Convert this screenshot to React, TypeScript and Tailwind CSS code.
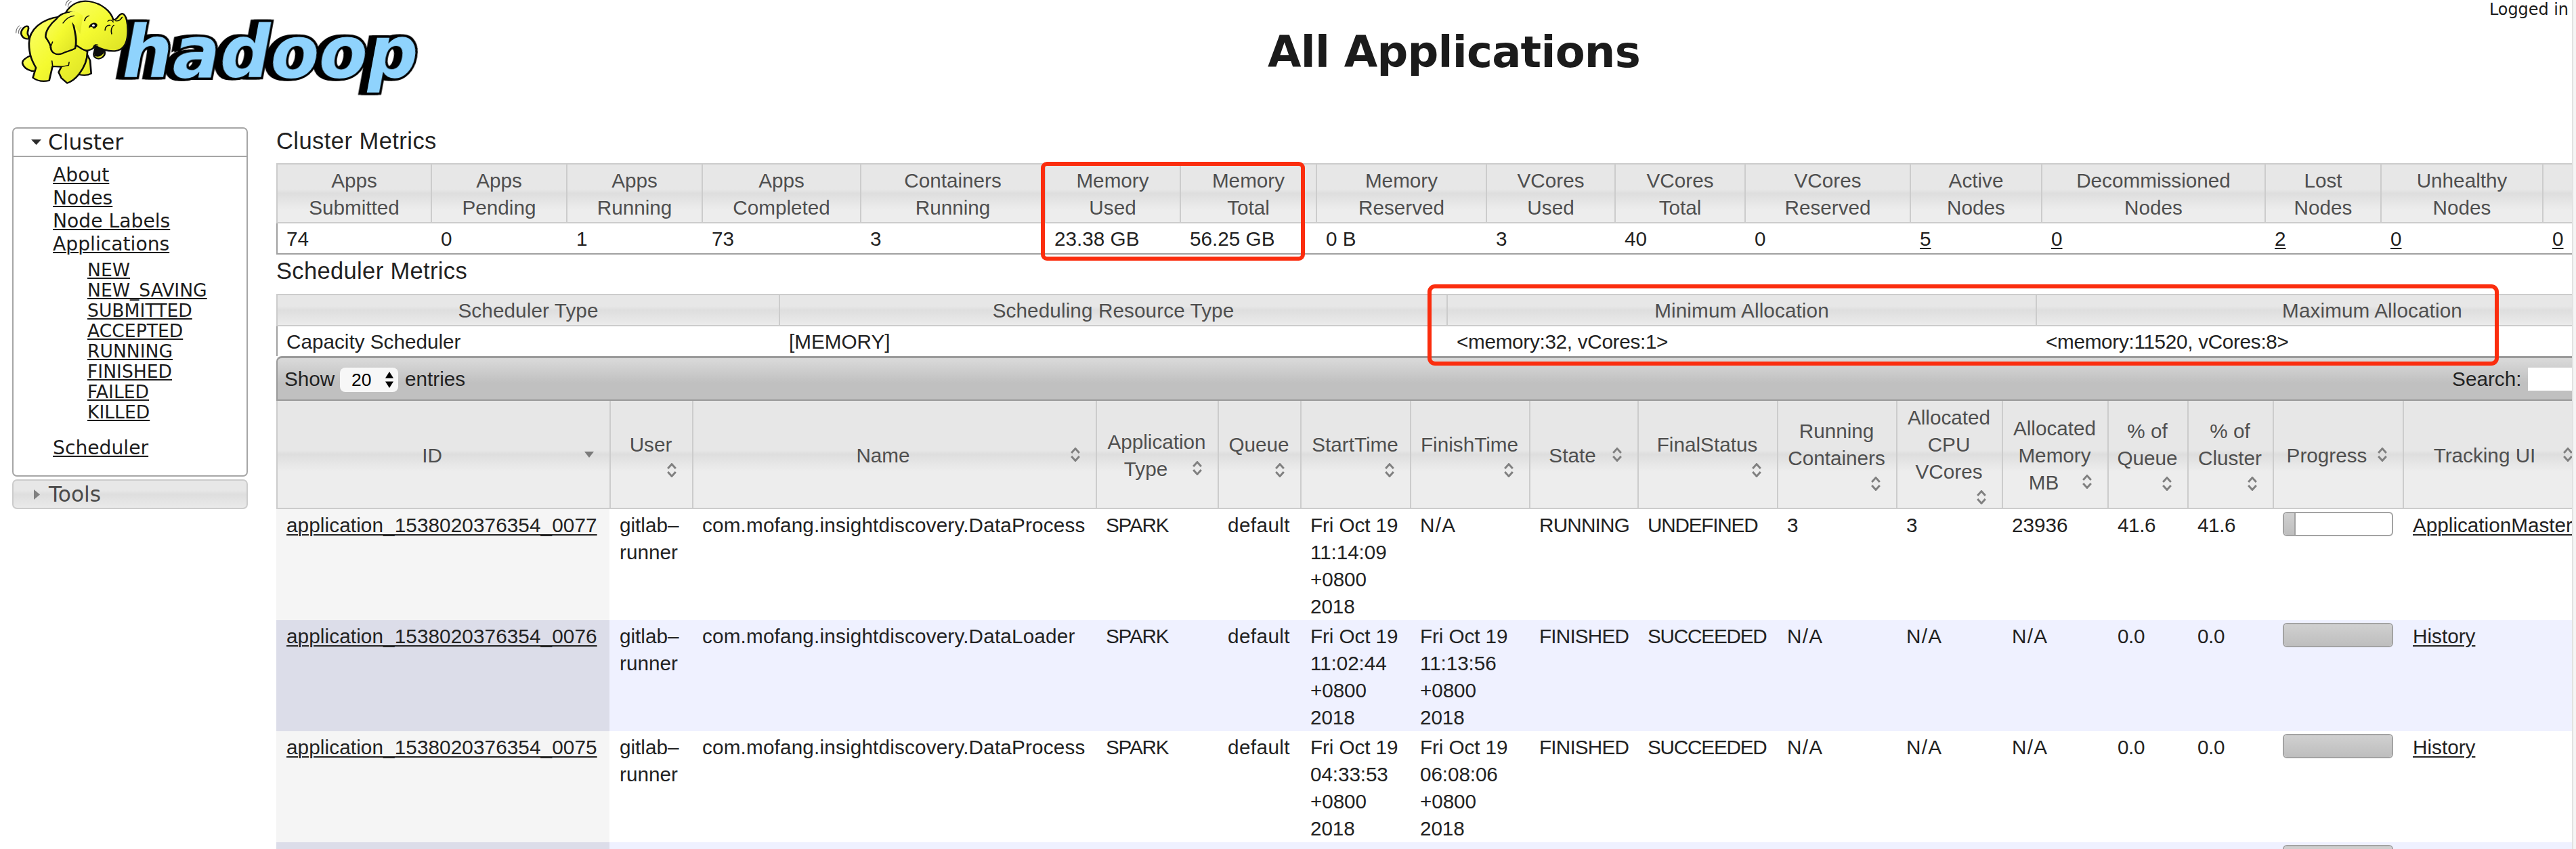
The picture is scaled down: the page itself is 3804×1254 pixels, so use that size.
import type { ReactNode } from 'react';

const GLASS =
  'bg-[linear-gradient(#e7e7e7_calc(50%-6px),#dedede_50%,#ededed_calc(50%+25px))]';
const LINK = 'underline decoration-2 underline-offset-[3px]';

type Metric = { label: [string, string]; value: string; link?: boolean };

const clusterMetrics: Metric[] = [
  { label: ['Apps', 'Submitted'], value: '74' },
  { label: ['Apps', 'Pending'], value: '0' },
  { label: ['Apps', 'Running'], value: '1' },
  { label: ['Apps', 'Completed'], value: '73' },
  { label: ['Containers', 'Running'], value: '3' },
  { label: ['Memory', 'Used'], value: '23.38 GB' },
  { label: ['Memory', 'Total'], value: '56.25 GB' },
  { label: ['Memory', 'Reserved'], value: '0 B' },
  { label: ['VCores', 'Used'], value: '3' },
  { label: ['VCores', 'Total'], value: '40' },
  { label: ['VCores', 'Reserved'], value: '0' },
  { label: ['Active', 'Nodes'], value: '5', link: true },
  { label: ['Decommissioned', 'Nodes'], value: '0', link: true },
  { label: ['Lost', 'Nodes'], value: '2', link: true },
  { label: ['Unhealthy', 'Nodes'], value: '0', link: true },
  { label: ['', ''], value: '0', link: true },
];

const schedulerMetrics = [
  ['Scheduler Type', 'Capacity Scheduler'],
  ['Scheduling Resource Type', '[MEMORY]'],
  ['Minimum Allocation', '<memory:32, vCores:1>'],
  ['Maximum Allocation', '<memory:11520, vCores:8>'],
];

type Column = { lines: string[]; icon: 'inline' | 'below'; sorted?: boolean };

const columns: Column[] = [
  { lines: ['ID'], icon: 'inline', sorted: true },
  { lines: ['User'], icon: 'below' },
  { lines: ['Name'], icon: 'inline' },
  { lines: ['Application', 'Type'], icon: 'inline' },
  { lines: ['Queue'], icon: 'below' },
  { lines: ['StartTime'], icon: 'below' },
  { lines: ['FinishTime'], icon: 'below' },
  { lines: ['State'], icon: 'inline' },
  { lines: ['FinalStatus'], icon: 'below' },
  { lines: ['Running', 'Containers'], icon: 'below' },
  { lines: ['Allocated', 'CPU', 'VCores'], icon: 'below' },
  { lines: ['Allocated', 'Memory', 'MB'], icon: 'inline' },
  { lines: ['% of', 'Queue'], icon: 'below' },
  { lines: ['% of', 'Cluster'], icon: 'below' },
  { lines: ['Progress'], icon: 'inline' },
  { lines: ['Tracking UI'], icon: 'inline' },
];

type Job = {
  id: string;
  name: string;
  start: string[];
  finish: string[];
  state: string;
  final: string;
  containers: string;
  vcores: string;
  memory: string;
  queuePct: string;
  clusterPct: string;
  progress: number;
  tracking: string;
};

const done = {
  state: 'FINISHED',
  final: 'SUCCEEDED',
  containers: 'N/A',
  vcores: 'N/A',
  memory: 'N/A',
  queuePct: '0.0',
  clusterPct: '0.0',
  progress: 100,
  tracking: 'History',
};

const jobs: Job[] = [
  {
    id: 'application_1538020376354_0077',
    name: 'com.mofang.insightdiscovery.DataProcess',
    start: ['Fri Oct 19', '11:14:09', '+0800', '2018'],
    finish: ['N/A'],
    state: 'RUNNING',
    final: 'UNDEFINED',
    containers: '3',
    vcores: '3',
    memory: '23936',
    queuePct: '41.6',
    clusterPct: '41.6',
    progress: 11,
    tracking: 'ApplicationMaster',
  },
  {
    id: 'application_1538020376354_0076',
    name: 'com.mofang.insightdiscovery.DataLoader',
    start: ['Fri Oct 19', '11:02:44', '+0800', '2018'],
    finish: ['Fri Oct 19', '11:13:56', '+0800', '2018'],
    ...done,
  },
  {
    id: 'application_1538020376354_0075',
    name: 'com.mofang.insightdiscovery.DataProcess',
    start: ['Fri Oct 19', '04:33:53', '+0800', '2018'],
    finish: ['Fri Oct 19', '06:08:06', '+0800', '2018'],
    ...done,
  },
];

const APP_GRID =
  'grid grid-cols-[492px_122px_596px_180px_122px_162px_176px_160px_206px_176px_156px_156px_118px_126px_192px_274px]';
const CLUSTER_GRID =
  'grid grid-cols-[228px_200px_200px_234px_272px_200px_201px_251px_190px_192px_244px_194px_330px_171px_239px_244px]';
const SCHED_GRID = 'grid grid-cols-[742px_986px_870px_992px]';

function Logo() {
  return (
    <svg className="block h-[150px] w-[640px] overflow-visible" viewBox="0 0 640 150">
      <g transform="translate(21.1 0) skewX(-10.5)">
        <text
          x="175"
          y="114"
          textLength="437"
          lengthAdjust="spacingAndGlyphs"
          fill="#8fd3fd"
          stroke="#000"
          strokeWidth="7"
          paintOrder="stroke"
          fontFamily="'DejaVu Sans'"
          fontWeight="bold"
          fontSize="106"
          className="[filter:drop-shadow(-4px_0_0_#000)_drop-shadow(-5px_0_0_#000)]"
        >
          hadoop
        </text>
      </g>
      <defs>
        <linearGradient id="skin" x1="0" y1="0" x2="1" y2="1">
          <stop offset="0" stopColor="#fbff6a" />
          <stop offset="0.5" stopColor="#f4fa30" />
          <stop offset="1" stopColor="#dbe024" />
        </linearGradient>
      </defs>
      <g
        transform="scale(0.40816 0.33333)"
        fill="url(#skin)"
        stroke="#0c0c0c"
        strokeWidth="6.5"
        strokeLinejoin="round"
        strokeLinecap="round"
      >
        <path d="M104 172 C84 176 70 152 80 132 C86 120 96 112 102 118 C108 134 92 140 104 160 Z" />
        <path d="M108 248 C90 258 78 270 82 284 C88 304 108 316 128 316 L150 280 Z" />
        <path d="M312 232 L326 268 L330 326 C316 336 300 334 284 330 L290 250 Z" />
        <path d="M216 74 C150 84 105 132 105 192 C105 246 118 274 130 300 L119 344 C136 360 158 362 178 357 L190 294 L222 296 L212 320 L222 346 L243 368 C262 360 276 344 286 328 C304 300 316 266 316 232 L320 170 Z" />
        <path d="M345 200 C348 222 330 244 346 256 C362 266 384 252 378 224 Z" />
        <path fill="#0c0c0c" d="M346 204 L376 224 C372 240 360 252 346 246 Z" />
        <path d="M238 56 C256 16 290 0 322 6 C366 14 402 48 410 88 C428 88 424 66 442 60 C458 64 464 108 462 150 C460 196 446 222 416 226 C390 228 366 218 346 204 C330 224 312 228 298 218 L262 190 Z" />
        <path d="M268 54 C236 50 214 66 204 84 C182 106 164 138 165 164 C176 186 184 196 184 214 C186 234 204 246 224 238 C236 228 256 226 272 214 C280 180 272 150 268 122 C262 96 262 84 268 54 Z" />
        <path stroke="none" d="M240 66 C262 40 282 52 300 70 L290 150 L262 100 Z" />
        <path fill="none" strokeWidth="4" d="M228 102 C238 84 252 72 268 70 M190 290 L188 270 M222 296 L246 290 M250 276 L248 290 M306 92 C308 80 314 72 322 70 M390 94 C398 84 408 92 410 98 M418 92 C430 96 438 84 442 76 M380 134 C380 120 388 110 398 112 M404 150 C400 134 404 118 412 112 M300 218 L316 230 M338 208 C342 196 350 196 354 200 M182 212 L190 186" />
        <path fill="#0c0c0c" strokeWidth="2" d="M322 122 C324 104 342 96 350 106 C354 116 346 126 338 126 C336 118 330 116 322 122 Z" />
        <circle cx="338" cy="113" r="5" fill="#fff" stroke="none" />
        <path fill="none" stroke="#777" strokeWidth="3" d="M58 146 C58 132 62 122 70 114 M68 148 C66 138 70 128 76 122 M238 24 C238 12 244 4 250 0 M246 30 C246 20 252 10 258 6" />
      </g>
    </svg>
  );
}

function SideLink({ children }: { children: ReactNode }) {
  return (
    <li>
      <a className="underline decoration-2 underline-offset-[2px]">{children}</a>
    </li>
  );
}

function Sidebar() {
  return (
    <aside className="ml-[18px] w-[348px] shrink-0 font-['DejaVu_Sans',sans-serif] text-[#1c1c1c]">
      <section className="mt-[1px] h-[516px] rounded-[7px] border-2 border-[#a6a6a6]">
        <h3 className="flex h-[42px] items-center border-b-2 border-[#a6a6a6] pl-[26px] text-[31.3px] leading-[40px]">
          <svg className="mr-[10px] h-[8px] w-[15px]" viewBox="0 0 15 8">
            <path d="M0 0H15L7.5 8Z" fill="#2b2b2b" />
          </svg>
          Cluster
        </h3>
        <ul className="pt-[10px] pl-[58px] text-[28.2px] leading-[34px]">
          <SideLink>About</SideLink>
          <SideLink>Nodes</SideLink>
          <SideLink>Node Labels</SideLink>
          <SideLink>Applications</SideLink>
          <li>
            <ul className="mt-[6px] mb-[21px] pl-[51px] text-[26.6px] leading-[30px]">
              {['NEW', 'NEW_SAVING', 'SUBMITTED', 'ACCEPTED', 'RUNNING', 'FINISHED', 'FAILED', 'KILLED'].map((s) => (
                <SideLink key={s}>{s}</SideLink>
              ))}
            </ul>
          </li>
          <SideLink>Scheduler</SideLink>
        </ul>
      </section>
      <section className={`mt-[4px] flex h-[44px] items-center rounded-[7px] border-2 border-[#cccccc] pl-[30px] text-[31.3px] leading-[40px] text-[#4a4a4a] ${GLASS}`}>
        <svg className="mr-[13px] h-[15px] w-[9px]" viewBox="0 0 9 15">
          <path d="M0 0V15L9 7.5Z" fill="#808080" />
        </svg>
        Tools
      </section>
    </aside>
  );
}

function SortIcon({ sorted }: { sorted?: boolean }) {
  return (
    <svg className="h-[21px] w-[14px]" viewBox="0 0 14 21">
      {sorted ? (
        <path d="M0 6H14L7 15Z" fill="#7a7a7a" />
      ) : (
        <path d="M1.2 8L7 1.6L12.8 8M1.2 13L7 19.4L12.8 13" fill="none" stroke="#808080" strokeWidth="3" />
      )}
    </svg>
  );
}

function HeaderCell({ column }: { column: Column }) {
  const inline = column.icon === 'inline';
  const upper = inline ? column.lines.slice(0, -1) : column.lines;
  return (
    <div className="flex h-[158px] flex-col justify-center border-l-2 border-[#cccccc] pt-[3px] pr-[14px] pl-[12px] text-center">
      {upper.map((l) => (
        <div key={l} className="flex h-[40px] justify-center whitespace-nowrap">
          {l}
        </div>
      ))}
      {inline ? (
        <div className="flex h-[40px] whitespace-nowrap">
          <span className="flex-1">{column.lines[column.lines.length - 1]}</span>
          <span className="flex w-[32px] justify-center pt-[8px]">
            <SortIcon sorted={column.sorted} />
          </span>
        </div>
      ) : (
        <div className="flex h-[31px] justify-end">
          <span className="flex w-[32px] justify-center pt-[7px]">
            <SortIcon />
          </span>
        </div>
      )}
    </div>
  );
}

function ProgressBar({ value }: { value: number }) {
  return (
    <div className="h-[36px] w-[163px] overflow-hidden rounded-[6px] border-2 border-[#a3a3a3] bg-white">
      <div
        className={`h-full bg-linear-to-b from-[#d0d0d0] to-[#bebebe] ${value < 100 ? 'border-r-2 border-[#a3a3a3]' : ''}`}
        style={{ width: `${value}%` }}
      />
    </div>
  );
}

function Cell({ children, className = '' }: { children?: ReactNode; className?: string }) {
  return <div className={`pt-[4px] pl-[15px] whitespace-nowrap ${className}`}>{children}</div>;
}

function Value({ children }: { children: string }) {
  return <span className={children === 'N/A' ? 'tracking-[1.3px]' : ''}>{children}</span>;
}

function Lines({ lines }: { lines: string[] }) {
  return (
    <>
      {lines.map((l) => (
        <div key={l}>
          <Value>{l}</Value>
        </div>
      ))}
    </>
  );
}

function JobRow({ job, even }: { job: Job; even: boolean }) {
  return (
    <div className={`${APP_GRID} h-[164px] ${even ? 'bg-[#eff1ff]' : 'bg-white'}`}>
      <Cell className={even ? 'bg-[#dcdde9] tracking-[0.1px]' : 'bg-[#f5f5f5] tracking-[0.1px]'}>
        <a className={LINK}>{job.id}</a>
      </Cell>
      <Cell>
        gitlab–
        <br />
        runner
      </Cell>
      <Cell className="tracking-[0.17px]">{job.name}</Cell>
      <Cell className="tracking-[-1.2px]">SPARK</Cell>
      <Cell className="tracking-[0.4px]">default</Cell>
      <Cell className="tracking-[-0.1px]">
        <Lines lines={job.start} />
      </Cell>
      <Cell className="tracking-[-0.1px]">
        <Lines lines={job.finish} />
      </Cell>
      <Cell className="tracking-[-0.8px]">{job.state}</Cell>
      <Cell className="tracking-[-1.2px]">{job.final}</Cell>
      <Cell>
        <Value>{job.containers}</Value>
      </Cell>
      <Cell>
        <Value>{job.vcores}</Value>
      </Cell>
      <Cell>
        <Value>{job.memory}</Value>
      </Cell>
      <Cell className="tracking-[-0.4px]">{job.queuePct}</Cell>
      <Cell className="tracking-[-0.4px]">{job.clusterPct}</Cell>
      <Cell>
        <ProgressBar value={job.progress} />
      </Cell>
      <Cell>
        <a className={LINK}>{job.tracking}</a>
      </Cell>
    </div>
  );
}

function ClusterTable() {
  return (
    <div className="relative w-[3590px]">
      <div className={`${CLUSTER_GRID} border-t-2 border-b-2 border-[#cccccc] ${GLASS}`}>
        {clusterMetrics.map((m, i) => (
          <div key={i} className="h-[85px] border-l-2 border-[#cccccc] pt-[4px] text-center leading-[40px] text-[#4f4f4f]">
            {m.label[0]}
            <br />
            {m.label[1]}
          </div>
        ))}
      </div>
      <div className={`${CLUSTER_GRID} h-[46px] border-b-2 border-l-2 border-[#a0a0a0] leading-[46px]`}>
        {clusterMetrics.map((m, i) => (
          <div key={i} className="pl-[13px] whitespace-nowrap">
            {m.link ? <a className={LINK}>{m.value}</a> : m.value}
          </div>
        ))}
      </div>
      <div className="absolute top-[-2px] left-[1129px] h-[146px] w-[390px] rounded-[9px] border-[6px] border-[#fb2d0e]" />
    </div>
  );
}

function SchedulerTable() {
  return (
    <div className="relative w-[3590px]">
      <div className={`${SCHED_GRID} border-t-2 border-b-2 border-[#cccccc] ${GLASS}`}>
        {schedulerMetrics.map(([label]) => (
          <div key={label} className="h-[44px] border-l-2 border-[#cccccc] text-center leading-[46px] tracking-[0.1px] text-[#4f4f4f]">
            {label}
          </div>
        ))}
      </div>
      <div className={`${SCHED_GRID} h-[44px] border-l-2 border-[#a0a0a0] leading-[46px]`}>
        {schedulerMetrics.map(([label, value]) => (
          <div key={label} className={`pl-[13px] ${value.startsWith('<') ? 'tracking-[-0.3px]' : ''}`}>
            {value}
          </div>
        ))}
      </div>
      <div className="absolute top-[-14px] left-[1700px] z-10 h-[120px] w-[1582px] rounded-[11px] border-[6px] border-[#fb2d0e]" />
    </div>
  );
}

function Toolbar() {
  return (
    <div className="flex h-[66px] w-[3590px] items-center rounded-tl-[8px] border-t-3 border-b-2 border-l-2 border-[#999999] bg-[linear-gradient(#dadada,#c0c0c0_60%,#c0c0c0)] pl-[10px]">
      <span className="w-[82px]">Show</span>
      <div className="mt-[3px] flex h-[36px] w-[86px] items-center justify-between rounded-[8px] bg-[#f7f7f7] pr-[7px] pl-[17px] text-[26.5px] text-black">
        20
        <svg className="h-[24px] w-[12px]" viewBox="0 0 12 24">
          <path d="M6 0L12 9.5H0ZM6 24L12 14.5H0Z" fill="#000" />
        </svg>
      </div>
      <span className="ml-[10px]">entries</span>
      <span className="ml-[2934px]">Search:</span>
      <div className="ml-[10px] h-[34px] w-[230px] bg-white" />
    </div>
  );
}

export default function App() {
  return (
    <div className="flex h-[1254px] w-[3804px] overflow-hidden bg-white">
      <div className="w-[3798px] shrink-0 overflow-hidden">
        <header className="flex h-[187px] justify-between font-['DejaVu_Sans',sans-serif] text-[#1b1b1b]">
          <Logo />
          <h1 className="mt-[45px] ml-[1232px] text-[64px] leading-[64px] font-bold tracking-[-0.75px] whitespace-nowrap">
            All Applications
          </h1>
          <div className="ml-auto pr-[5px] text-[23.9px] leading-[28px]">Logged in</div>
        </header>
        <div className="flex">
          <Sidebar />
          <main className="ml-[42px] shrink-0 font-['Liberation_Sans',sans-serif] text-[29.7px] leading-[40px] text-[#222222]">
            <h2 className="h-[54px] text-[34.5px] leading-[42px] tracking-[0.45px]">Cluster Metrics</h2>
            <ClusterTable />
            <h2 className="h-[58px] text-[34.5px] leading-[48px] tracking-[0.35px]">Scheduler Metrics</h2>
            <SchedulerTable />
            <Toolbar />
            <div className={`${APP_GRID} border-b-2 border-[#cccccc] text-[#4f4f4f] ${GLASS}`}>
              {columns.map((c, i) => (
                <HeaderCell key={i} column={c} />
              ))}
            </div>
            {jobs.map((j, i) => (
              <JobRow key={j.id} job={j} even={i % 2 === 1} />
            ))}
            <div className={`${APP_GRID} h-[60px] bg-[#eff1ff]`}>
              <div className="bg-[#dcdde9]" />
              <div className="col-start-15 pt-[4px] pl-[15px]">
                <ProgressBar value={100} />
              </div>
            </div>
          </main>
        </div>
      </div>
      <div className="w-[6px] border-l-2 border-[#e2e2e2] bg-[#f5f5f5]" />
    </div>
  );
}
